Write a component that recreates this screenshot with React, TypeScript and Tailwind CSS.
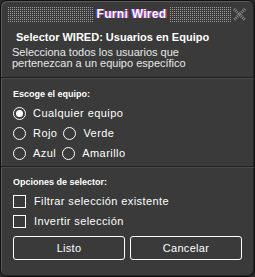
import React, { useState } from "react";

const font = { fontFamily: '"Liberation Sans", "DejaVu Sans", sans-serif' };
const dotRows = [0, 1, 2, 3, 4, 5, 6, 7];

// textura punteada de la barra de titulo
function Dots({ className }: { className: string }) {
  return (
    <div className={"shrink-0 h-[15px] flex flex-col gap-px " + className}>
      {dotRows.map((r) => (
        <div key={r} className="h-px w-full bg-[repeating-linear-gradient(90deg,#9a9a9a_0px,#9a9a9a_1px,transparent_1px,transparent_2px)]" />
      ))}
    </div>
  );
}

function Radio({ checked, label, onClick }: { checked: boolean; label: string; onClick: () => void }) {
  return (
    <button onClick={onClick} className="flex items-center gap-[7px] text-left">
      <span className="w-[13px] h-[13px] rounded-full border border-white flex items-center justify-center">
        {checked && <span className="w-[7px] h-[7px] rounded-full bg-white" />}
      </span>
      <span className="text-[11px] leading-[13px] tracking-[0.45px] text-white">{label}</span>
    </button>
  );
}

function Check({ label }: { label: string }) {
  const [on, setOn] = useState(false);
  return (
    <button onClick={() => setOn(!on)} className="flex items-center gap-[8px] text-left">
      <span className="w-[13px] h-[13px] border border-white flex items-center justify-center">
        {on && <span className="w-[7px] h-[7px] bg-white" />}
      </span>
      <span className="text-[11px] leading-[13px] tracking-[0.4px] text-white">{label}</span>
    </button>
  );
}

export default function App() {
  const [team, setTeam] = useState("any");

  return (
    <div className="w-[255px] h-[277px] bg-[#2a2a2a]" style={font}>
      <div className="w-full h-full flex flex-col bg-[#3a3a3a] border border-[#111] rounded-[7px] shadow-[inset_1px_1px_0_#5a5a5a,inset_-1px_-1px_0_#222] overflow-hidden">
        {/* barra de titulo */}
        <div className="h-[26px] shrink-0 flex items-center pl-[7px] pr-[7px]">
          <Dots className="w-[85px]" />
          <span className="flex-1 whitespace-nowrap text-center text-white font-bold text-[12px] tracking-[0.3px] [text-shadow:-1px_0_#3b4bff,1px_0_#ff2a2a]">
            Furni Wired
          </span>
          <Dots className="w-[62px]" />
          <svg width="15" height="15" viewBox="0 0 15 15" className="shrink-0">
            <path d="M2 2 L13 13 M13 2 L2 13" stroke="#8a8a8a" strokeWidth="3" strokeDasharray="1 1" />
          </svg>
        </div>

        {/* cabecera */}
        <div className="shrink-0 px-[11px] pt-[4px] pb-[8px] border-b border-[#1f1f1f]">
          <div className="text-white font-bold text-[11px] leading-[13px] pl-[4px]">
            Selector WIRED: Usuarios en Equipo
          </div>
          <div className="text-[#e8e8e8] text-[11px] leading-[11px] mt-[3px]">
            Selecciona todos los usuarios que
            <br />
            pertenezcan a un equipo específico
          </div>
        </div>

        {/* equipos */}
        <div className="shrink-0 px-[12px] pt-[9px] pb-[6px] border-t border-[#4a4a4a] border-b-[#1f1f1f] border-b">
          <div className="text-white font-bold text-[9px] leading-[12px] mb-[7px]">Escoge el equipo:</div>
          <div className="flex flex-col gap-[7px]">
            <Radio checked={team === "any"} label="Cualquier equipo" onClick={() => setTeam("any")} />
            <div className="flex gap-[6px]">
              <Radio checked={team === "red"} label="Rojo" onClick={() => setTeam("red")} />
              <Radio checked={team === "green"} label="Verde" onClick={() => setTeam("green")} />
            </div>
            <div className="flex gap-[6px]">
              <Radio checked={team === "blue"} label="Azul" onClick={() => setTeam("blue")} />
              <Radio checked={team === "yellow"} label="Amarillo" onClick={() => setTeam("yellow")} />
            </div>
          </div>
        </div>

        {/* opciones */}
        <div className="px-[12px] pt-[8px] border-t border-[#4a4a4a] flex-1">
          <div className="text-white font-bold text-[9px] leading-[12px] mb-[7px]">Opciones de selector:</div>
          <div className="flex flex-col gap-[7px]">
            <Check label="Filtrar selección existente" />
            <Check label="Invertir selección" />
          </div>
          <div className="flex gap-[5px] mt-[8px]">
            <button className="flex-1 h-[24px] border border-white rounded-[3px] text-white text-[11px] tracking-[0.3px]">Listo</button>
            <button className="flex-1 h-[24px] border border-white rounded-[3px] text-white text-[11px] tracking-[0.3px]">Cancelar</button>
          </div>
        </div>
      </div>
    </div>
  );
}
